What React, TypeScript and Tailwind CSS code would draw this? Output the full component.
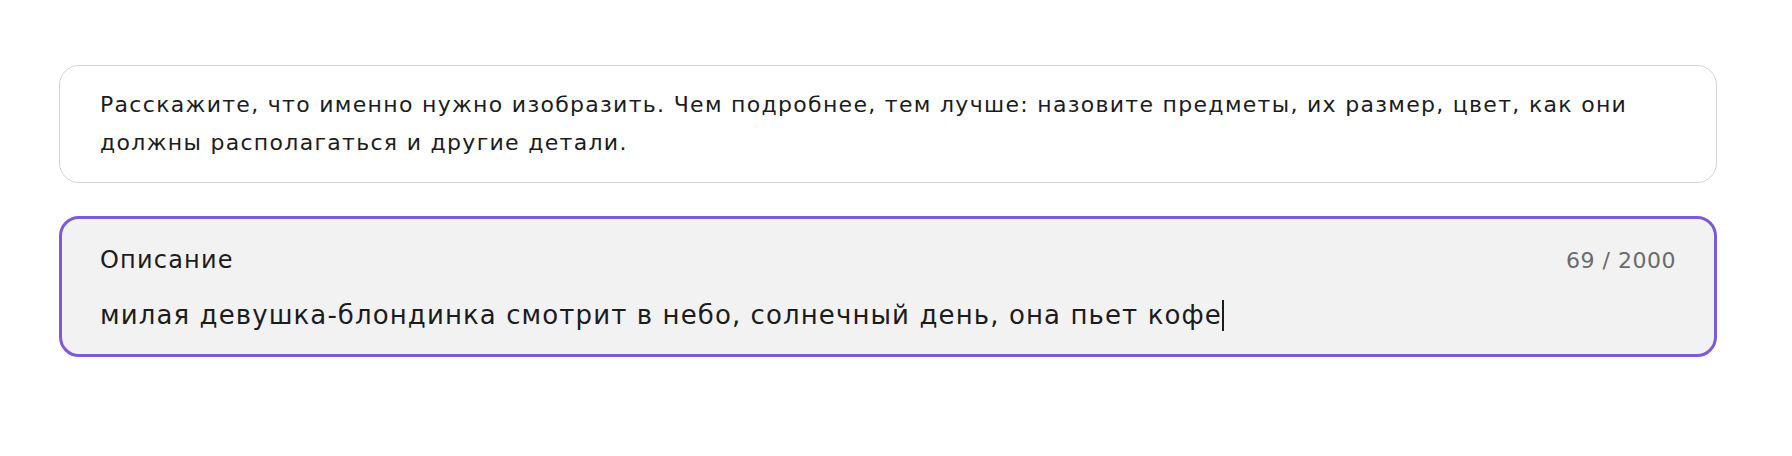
import React from "react";

export default function App() {
  return (
    <div
      className="w-[1792px] h-[456px] bg-white pl-[59px] pt-[65px] text-[#1c1c1c]"
      style={{ fontFamily: '"DejaVu Sans", "Noto Sans", sans-serif' }}
    >
      <div className="w-[1658px] flex flex-col gap-[33px]">
        <div className="rounded-[20px] border border-[#d4d4d4] px-[40px] py-[20px] text-[22px] leading-[38px] tracking-[1.3px]">
          Расскажите, что именно нужно изобразить. Чем подробнее, тем лучше: назовите предметы, их размер, цвет, как они должны располагаться и другие детали.
        </div>
        <div className="rounded-[20px] border-[3px] border-[#7f5ad8] bg-[#f2f2f2] pl-[38px] pr-[38px] pt-[26px] pb-[21px]">
          <div className="flex items-center justify-between h-[30px]">
            <span className="text-[24px] tracking-[1.2px]">Описание</span>
            <span className="text-[22px] tracking-[0.5px] text-[#6b6b6b]">69 / 2000</span>
          </div>
          <div className="mt-[22px] h-[36px] flex items-center text-[26px] tracking-[1.1px]">
            <span>милая девушка-блондинка смотрит в небо, солнечный день, она пьет кофе</span>
            <span className="inline-block w-[2px] h-[31px] bg-[#1c1c1c]" />
          </div>
        </div>
      </div>
    </div>
  );
}
